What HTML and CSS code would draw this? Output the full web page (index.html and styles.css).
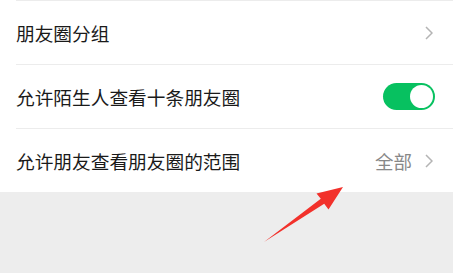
FILE: index.html
```html
<!DOCTYPE html>
<html lang="zh-CN">
<head>
    <meta charset="UTF-8">
    <title>朋友圈权限</title>
    <link rel="stylesheet" href="styles.css">
</head>
<body>
    <div class="page">
        <ul class="list">
            <li class="item">
                <span class="label">朋友圈分组</span>
                <span class="more">
                    <svg class="chevron" viewBox="0 0 8 14"><path d="M1 1 L7 7 L1 13" /></svg>
                </span>
            </li>
            <li class="item">
                <span class="label">允许陌生人查看十条朋友圈</span>
                <span class="switch on"><i class="knob"></i></span>
            </li>
            <li class="item">
                <span class="label">允许朋友查看朋友圈的范围</span>
                <span class="more">
                    <span class="value">全部</span>
                    <svg class="chevron" viewBox="0 0 8 14"><path d="M1 1 L7 7 L1 13" /></svg>
                </span>
            </li>
        </ul>
        <div class="rest"></div>
        <svg class="arrow" width="453" height="273" viewBox="0 0 453 273">
            <polygon points="264,242 324.2,203.8 328.5,209.5 343,187 316.5,193.5 320.8,198.8" />
        </svg>
    </div>
</body>
</html>
```

FILE: styles.css
```css
* {
    padding: 0;
    margin: 0;
    box-sizing: border-box;
}

body {
    width: 453px;
    height: 273px;
    overflow: hidden;
    background-color: #ededed;
    font-family: "Noto Sans CJK SC", "Noto Sans", sans-serif;
}

.page {
    position: relative;
    height: 273px;
}

.list {
    list-style: none;
    background-color: #fff;
    padding-left: 16px;
}

.item {
    height: 64px;
    border-top: 1px solid #ececec;
    display: flex;
    align-items: center;
    justify-content: space-between;
    padding-right: 20px;
}

.label {
    font-size: 18.7px;
    color: #1a1a1a;
}

.more {
    display: flex;
    align-items: center;
    gap: 13px;
}

.value {
    font-size: 18.5px;
    color: #888;
}

.chevron {
    width: 8px;
    height: 14px;
    fill: none;
    stroke: #b4b4b4;
    stroke-width: 1.5;
}

.switch {
    width: 52px;
    height: 27px;
    border-radius: 14px;
    background-color: #07c160;
    display: flex;
    align-items: center;
    justify-content: flex-end;
    padding: 2px;
    margin-right: -2px;
}

.knob {
    width: 23px;
    height: 23px;
    border-radius: 50%;
    background-color: #fff;
}

.rest {
    height: 81px;
}

.arrow {
    position: absolute;
    left: 0;
    top: 0;
    fill: #f2312b;
}
```
